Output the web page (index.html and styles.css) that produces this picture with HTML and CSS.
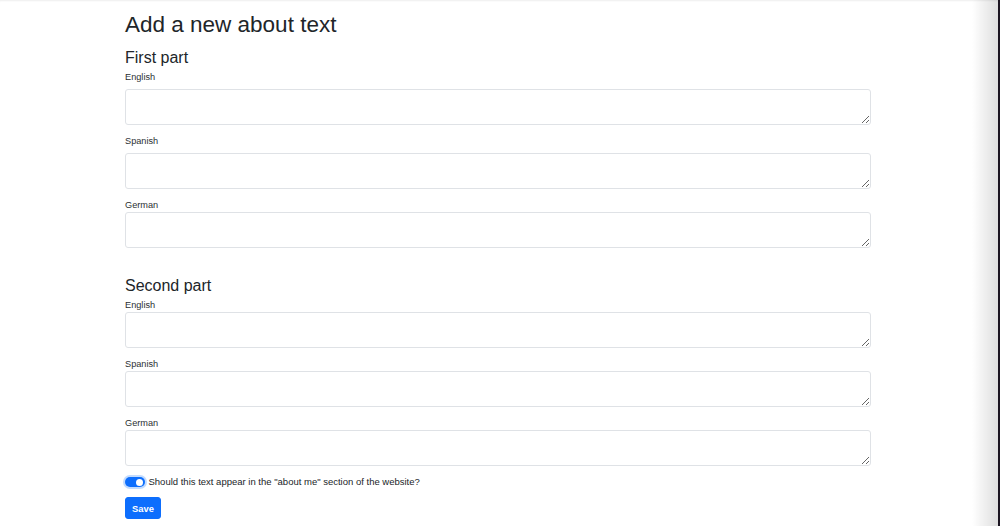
FILE: index.html
```html
<!DOCTYPE html>
<html lang="en">
<head>
  <meta charset="UTF-8">
  <meta name="viewport" content="width=device-width, initial-scale=1.0">
  <title>Add a new about text</title>
  <link rel="stylesheet" href="styles.css">
</head>
<body>

  <div class="page">
    <div class="container">
      <!-- Title -->
      <h1 class="title">Add a new about text</h1>

      <!-- First part -->
      <h2 class="part-title">First part</h2>

      <div class="field">
        <label class="field-label">English</label>
        <textarea class="field-input"></textarea>
      </div>

      <div class="field">
        <label class="field-label">Spanish</label>
        <textarea class="field-input"></textarea>
      </div>

      <div class="field">
        <label class="field-label tight">German</label>
        <textarea class="field-input"></textarea>
      </div>

      <!-- Second part -->
      <h2 class="part-title second">Second part</h2>

      <div class="field">
        <label class="field-label tight">English</label>
        <textarea class="field-input"></textarea>
      </div>

      <div class="field">
        <label class="field-label tight">Spanish</label>
        <textarea class="field-input"></textarea>
      </div>

      <div class="field">
        <label class="field-label tight">German</label>
        <textarea class="field-input"></textarea>
      </div>

      <!-- Visibility switch -->
      <label class="switch-row">
        <span class="switch"><span class="switch-knob"></span></span>
        <span class="switch-text">Should this text appear in the "about me" section of the website?</span>
      </label>

      <button class="save-button">Save</button>
    </div>
  </div>

</body>
</html>
```

FILE: styles.css
```css
/* Basic reset */
* {
  margin: 0;
  padding: 0;
  box-sizing: border-box;
  font-family: "Liberation Sans", Arial, sans-serif;
}

body {
  background-color: #1b1420;
  color: #212529;
}

.page {
  position: relative;
  min-height: 100vh;
  margin-right: 2px;
  background-color: #ffffff;
  box-shadow: inset 0 2px 2px -1px rgba(0, 0, 0, 0.07);
}

/* Soft shadow on the right edge of the window */
.page::after {
  content: "";
  position: absolute;
  top: 0;
  right: 0;
  bottom: 0;
  width: 26px;
  background: linear-gradient(to right, rgba(0, 0, 0, 0), rgba(0, 0, 0, 0.13));
  pointer-events: none;
}

.container {
  width: 746px;
  margin-left: 125px;
  padding-top: 11px;
}

.title {
  font-size: 22.5px;
  line-height: 27px;
  font-weight: normal;
  margin-bottom: 10px;
}

.part-title {
  font-size: 16px;
  line-height: 19px;
  font-weight: normal;
  margin-bottom: 4px;
}

.part-title.second {
  margin-top: 28px;
}

.field {
  margin-bottom: 10px;
}

.field-label {
  display: block;
  font-size: 9.2px;
  line-height: 12px;
  color: #2b2f33;
  margin-bottom: 6px;
}

.field-label.tight {
  margin-bottom: 1px;
}

.field-input {
  display: block;
  width: 100%;
  height: 36px;
  border: 1px solid #dfe2e6;
  border-radius: 3px;
  background-color: #ffffff;
  outline: none;
}

/* Toggle switch */
.switch-row {
  display: flex;
  align-items: center;
  gap: 4px;
  height: 12px;
  margin-bottom: 9px;
}

.switch {
  position: relative;
  width: 19.5px;
  height: 10px;
  border-radius: 5px;
  background-color: #0d6efd;
  box-shadow: 0 0 0 2px rgba(13, 110, 253, 0.25);
}

.switch-knob {
  position: absolute;
  top: 1.5px;
  right: 1.5px;
  width: 7px;
  height: 7px;
  border-radius: 50%;
  background-color: #ffffff;
}

.switch-text {
  font-size: 9.5px;
  line-height: 12px;
}

.save-button {
  height: 22px;
  padding: 0 6px;
  font-size: 9.4px;
  font-weight: bold;
  color: #ffffff;
  background-color: #0d6efd;
  border: 1px solid #0d6efd;
  border-radius: 3px;
  cursor: pointer;
}
```
